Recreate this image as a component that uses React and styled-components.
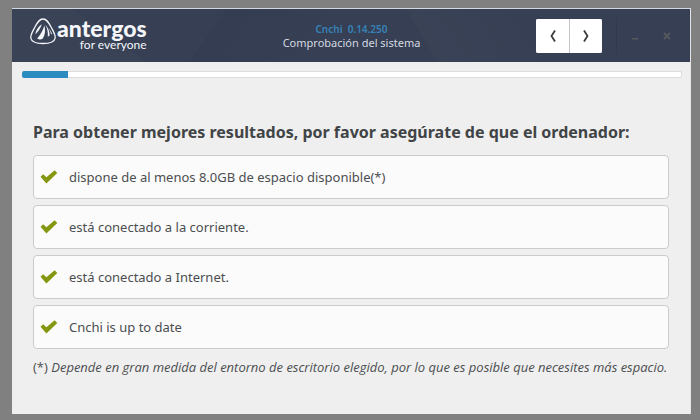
import { useState } from 'react';
import styled, { createGlobalStyle } from 'styled-components';

const GlobalStyle = createGlobalStyle`
  * {
    box-sizing: border-box;
  }

  body {
    margin: 0;
    background-color: #808080;
    font-family: "Noto Sans", sans-serif;
    color: #4b4e50;
  }
`;

const Desktop = styled.div`
  display: flex;
  min-height: 100vh;
  padding: 8px 9px 6px 12px;
`;

const InstallerWindow = styled.main`
  flex: 1;
  min-width: 0;
  background-color: #efefef;
  border-top: 1px solid #d5d8de;
  border-right: 1px solid #e4e4e4;
`;

const HeaderBar = styled.header`
  display: grid;
  grid-template-columns: 1fr auto 1fr;
  align-items: center;
  height: 53px;
  padding: 0 16px 0 17px;
  /* Faint facets over the dark blue */
  background:
    linear-gradient(60deg, transparent 60%, rgba(255, 255, 255, 0.02) 60%, transparent 78%),
    linear-gradient(125deg, transparent 30%, rgba(20, 30, 60, 0.08) 30%, transparent 45%),
    linear-gradient(35deg, rgba(255, 255, 255, 0.02) 18%, transparent 18%),
    #363f53;
`;

const Brand = styled.div`
  display: flex;
  align-items: flex-start;
  padding-bottom: 4px;
  color: #f4f6fa;
`;

const BrandText = styled.div`
  display: flex;
  flex-direction: column;
  align-items: flex-end;
`;

const BrandName = styled.span`
  font-family: Lato, sans-serif;
  font-size: 23px;
  font-weight: 900;
  line-height: 22px;
`;

const BrandTagline = styled.span`
  font-family: Lato, sans-serif;
  font-size: 12px;
  line-height: 12px;
`;

const TitleGroup = styled.div`
  text-align: center;
`;

const Version = styled.p`
  margin: 0;
  font-size: 10px;
  font-weight: 600;
  line-height: 14px;
  color: #3783b8;
  white-space: pre;
`;

const Title = styled.h1`
  margin: 0;
  font-size: 11px;
  font-weight: 400;
  line-height: 14px;
  color: #d5d9e1;
`;

const Controls = styled.div`
  display: flex;
  align-items: center;
  justify-content: flex-end;
`;

const NavButtons = styled.div`
  display: flex;
  border-radius: 2px;
  overflow: hidden;
  background-color: #fff;
`;

const NavButton = styled.button`
  display: grid;
  place-items: center;
  width: 33px;
  height: 34px;
  padding: 0;
  border: 0;
  background: #fff;
  color: #3c3c3c;

  & + & {
    border-left: 1px solid #c4c4c4;
  }
`;

const Separator = styled.span`
  width: 1px;
  height: 36px;
  margin: 0 2px 0 14px;
  background-color: #303950;
`;

const WindowButton = styled.button`
  display: grid;
  place-items: center;
  width: 32px;
  height: 32px;
  padding: 0;
  border: 0;
  background: transparent;
  color: #55585c;

  &:last-child {
    margin-right: -9px;
  }
`;

const Progress = styled.div`
  height: 7px;
  margin: 9px 8px 0 10px;
  border: 1px solid #dcdcdc;
  border-radius: 2px;
  background-color: #fff;
`;

const ProgressFill = styled.div`
  height: 7px;
  margin: -1px;
  border-radius: 2px 0 0 2px;
  background-color: #2c8cc0;
`;

const Content = styled.section`
  padding: 42px 21px 0;
`;

const Heading = styled.h2`
  margin: 0 0 11px;
  font-size: 16px;
  font-weight: 700;
  line-height: 24px;
  color: #414446;
`;

const CheckList = styled.ul`
  display: flex;
  flex-direction: column;
  gap: 6px;
  margin: 0;
  padding: 0;
  list-style: none;
`;

const CheckItem = styled.li`
  display: flex;
  align-items: center;
  gap: 11px;
  height: 44px;
  padding: 0 6px;
  border: 1px solid #cbcbcb;
  border-radius: 4px;
  background-color: #fbfbfb;
  font-size: 13px;
  line-height: 20px;
`;

const Note = styled.p`
  margin: 8px 0 0;
  font-family: "Open Sans", sans-serif;
  font-size: 13px;
  line-height: 20px;
`;

const Logo = () => (
  <svg width="28" height="28" viewBox="0 0 28 28" fill="none" aria-hidden="true">
    <path
      d="M14 2C17.6 2 19.5 5 22.2 10.2C24.7 15 26.7 18 26.2 21C25.4 25.4 20 26.5 14 26.5C8 26.5 2.6 25.4 1.8 21C1.3 18 3.3 15 5.8 10.2C8.5 5 10.4 2 14 2Z"
      stroke="currentColor"
      strokeWidth="1.3"
    />
    <path d="M12.8 7.2C9.6 9.2 7.2 12.6 6.2 17.2C8.6 15.4 11.6 11.4 12.8 7.2Z" fill="currentColor" />
    <path d="M15.2 8.4C14.2 13 11.6 17.4 8.2 21.4C9.8 22.8 12.2 22.8 13.8 21.6C16.2 17.6 16.8 12.8 15.2 8.4Z" fill="currentColor" />
    <path d="M16.2 7.8C18.4 11.6 19.2 15.4 18.8 19.8L20.6 18.6C20.6 14.2 19.2 10.4 16.2 7.8Z" fill="currentColor" />
    <path d="M19.6 11.4C21 13.4 21.8 15.4 22 17.6L23 16.8C22.4 14.6 21.2 12.8 19.6 11.4Z" fill="currentColor" />
  </svg>
);

const Chevron = ({ forward }) => (
  <svg width="8" height="14" viewBox="0 0 8 14" fill="none" aria-hidden="true">
    <path d={forward ? 'M2 1.5L5.5 7L2 12.5' : 'M6 1.5L2.5 7L6 12.5'} stroke="currentColor" strokeWidth="1.8" />
  </svg>
);

const CheckMark = () => (
  <svg width="18" height="14" viewBox="0 0 18 14" aria-hidden="true">
    <path d="M0.5 6.8L3.2 4.2L6.4 7.3L14.6 0.3L17.3 2.9L6.4 13.5Z" fill="#859710" />
  </svg>
);

const checks = [
  'dispone de al menos 8.0GB de espacio disponible(*)',
  'está conectado a la corriente.',
  'está conectado a Internet.',
  'Cnchi is up to date',
];

const App = () => {
  const [progress] = useState(7);

  return (
    <Desktop>
      <GlobalStyle />
      <InstallerWindow>
        <HeaderBar>
          <Brand>
            <Logo />
            <BrandText>
              <BrandName>antergos</BrandName>
              <BrandTagline>for everyone</BrandTagline>
            </BrandText>
          </Brand>

          <TitleGroup>
            <Version>Cnchi  0.14.250</Version>
            <Title>Comprobación del sistema</Title>
          </TitleGroup>

          <Controls>
            <NavButtons>
              <NavButton type="button" aria-label="Anterior"><Chevron /></NavButton>
              <NavButton type="button" aria-label="Siguiente"><Chevron forward /></NavButton>
            </NavButtons>
            <Separator />
            <WindowButton type="button" aria-label="Minimizar">
              <svg width="8" height="8" viewBox="0 0 8 8" aria-hidden="true">
                <path d="M1 6H7V7.5H1Z" fill="currentColor" />
              </svg>
            </WindowButton>
            <WindowButton type="button" aria-label="Cerrar">
              <svg width="8" height="8" viewBox="0 0 8 8" aria-hidden="true">
                <path d="M1 1L7 7M7 1L1 7" stroke="currentColor" strokeWidth="2" />
              </svg>
            </WindowButton>
          </Controls>
        </HeaderBar>

        <Progress role="progressbar" aria-label="Progreso" aria-valuenow={progress} aria-valuemin={0} aria-valuemax={100}>
          <ProgressFill style={{ width: `${progress}%` }} />
        </Progress>

        <Content>
          <Heading>Para obtener mejores resultados, por favor asegúrate de que el ordenador:</Heading>
          <CheckList>
            {checks.map((text) => (
              <CheckItem key={text}>
                <CheckMark />
                {text}
              </CheckItem>
            ))}
          </CheckList>
          <Note>
            (*) <em>Depende en gran medida del entorno de escritorio elegido, por lo que es posible que necesites más espacio.</em>
          </Note>
        </Content>
      </InstallerWindow>
    </Desktop>
  );
};

export default App;
